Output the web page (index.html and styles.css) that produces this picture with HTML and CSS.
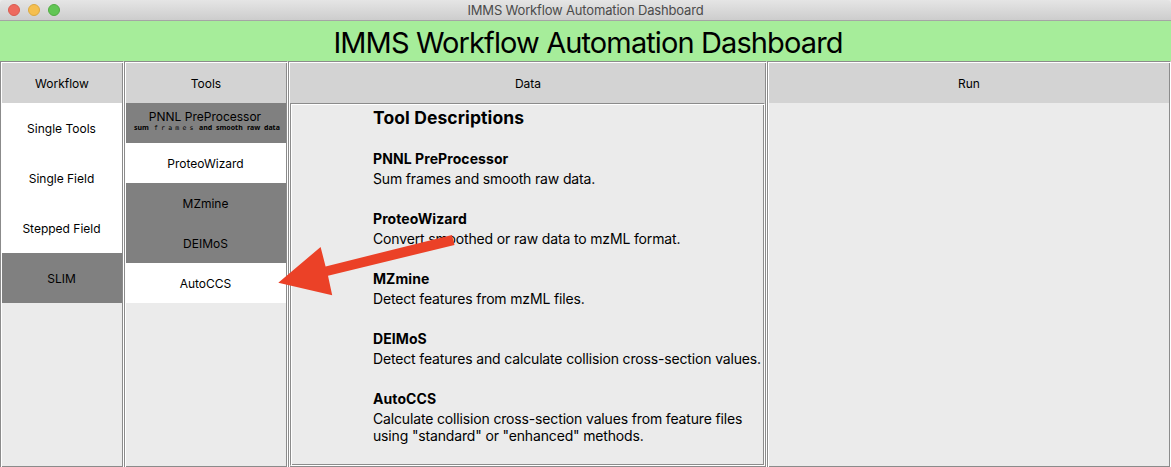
FILE: index.html
```html
<!DOCTYPE html>
<html lang="en">
<head>
<meta charset="utf-8">
<title>IMMS Workflow Automation Dashboard</title>
<link rel="stylesheet" href="styles.css">
</head>
<body>
<div class="window">
  <div class="titlebar">
    <div class="lights"><i class="light close"></i><i class="light minimize"></i><i class="light expand"></i></div>
    <span class="window-title">IMMS Workflow Automation Dashboard</span>
  </div>
  <header class="banner"><h1>IMMS Workflow Automation Dashboard</h1></header>
  <main class="columns">
    <section class="panel">
      <h2>Workflow</h2>
      <div class="option tall">Single Tools</div>
      <div class="option tall">Single Field</div>
      <div class="option tall">Stepped Field</div>
      <div class="option tall dark">SLIM</div>
    </section>
    <section class="panel">
      <h2>Tools</h2>
      <div class="option dark stacked"><span class="name">PNNL PreProcessor</span>
        <span class="hint"><b class="w-sum">sum</b><b class="w-frames">frames</b><b class="w-and">and</b><b class="w-smooth">smooth</b><b class="w-raw">raw</b><b class="w-data">data</b></span>
      </div>
      <div class="option">ProteoWizard</div>
      <div class="option dark">MZmine</div>
      <div class="option dark">DEIMoS</div>
      <div class="option">AutoCCS</div>
    </section>
    <section class="panel">
      <h2 class="data-head">Data</h2>
      <div class="descriptions">
        <h3>Tool Descriptions</h3>
        <article><h4>PNNL PreProcessor</h4><p>Sum frames and smooth raw data.</p></article>
        <article><h4>ProteoWizard</h4><p>Convert smoothed or raw data to mzML format.</p></article>
        <article><h4>MZmine</h4><p>Detect features from mzML files.</p></article>
        <article><h4>DEIMoS</h4><p>Detect features and calculate collision cross-section values.</p></article>
        <article><h4>AutoCCS</h4><p>Calculate collision cross-section values from feature files<br>using "standard" or "enhanced" methods.</p></article>
      </div>
    </section>
    <section class="panel">
      <h2>Run</h2>
    </section>
  </main>
  <svg class="arrow" width="178" height="50" viewBox="278 246 178 50"><path d="M278.3 282.8 320.6 247 325.6 266.4 452 235 454.5 245 328 275.7 332.2 295.2Z" fill="#eb4127"/></svg>
</div>
</body>
</html>
```
FILE: styles.css
```css
* { box-sizing: border-box; margin: 0; padding: 0; }
body { font-family: Inter, "Liberation Sans", sans-serif; color: #000; background: #ebebeb; overflow: hidden; }
.window { position: relative; width: 1171px; height: 467px; overflow: hidden; }
.titlebar { position: relative; height: 21px; display: flex; align-items: center; justify-content: center; background: linear-gradient(#e5e5e5, #cdcdcd); border-bottom: 1px solid #a5a5a5; border-radius: 4px 4px 0 0; }
.lights { position: absolute; left: 8px; top: 4px; display: flex; gap: 8px; }
.light { width: 12px; height: 12px; border-radius: 50%; border: 1px solid; }
.close { background: #ee6a5f; border-color: #d95c50; }
.minimize { background: #f5bf4f; border-color: #dba940; }
.expand { background: #61c654; border-color: #51ac43; }
.window-title { font-size: 13px; line-height: 20px; letter-spacing: -0.17px; color: #4b4b4b; white-space: nowrap; }
.banner { height: 40px; display: flex; justify-content: center; background: #a6ed9a; }
.banner h1 { font-size: 29px; line-height: 43px; font-weight: 400; letter-spacing: -0.89px; white-space: nowrap; padding-left: 5px; }
.columns { height: 407px; display: grid; grid-template-columns: 124px 164px 479px 404px; }
.panel, .descriptions { display: flex; flex-direction: column; border: 1px solid; border-color: #8b8b8b #fff #fff #8b8b8b; padding: 1px; background: linear-gradient(#fff, #fff) 0 0 / 100% 1px no-repeat, linear-gradient(#fff, #fff) 0 0 / 1px 100% no-repeat, linear-gradient(#8b8b8b, #8b8b8b) 0 100% / 100% 1px no-repeat, linear-gradient(#8b8b8b, #8b8b8b) 100% 0 / 1px 100% no-repeat, #ebebeb; }
.panel h2 { height: 40px; flex: none; background: #d3d3d3; font-size: 12px; line-height: 41px; font-weight: 400; text-align: center; }
.panel .data-head { padding-left: 1px; }
.option { height: 40px; background: #fff; font-size: 12px; line-height: 41px; text-align: center; white-space: nowrap; padding-right: 1px; }
.tall { height: 50px; line-height: 51px; }
.dark { background: #808080; }
.stacked { display: flex; flex-direction: column; line-height: 16px; padding-top: 6px; }
.name { padding-right: 1px; }
.hint { display: flex; width: 147px; margin: -2px 0 0 8px; height: 10px; font-family: "Noto Sans", sans-serif; font-size: 7px; line-height: 9px; text-align: left; }
.w-sum { width: 20px; }
.w-frames { width: 45px; font-family: "DejaVu Sans Mono", monospace; font-weight: 400; font-size: 6.5px; letter-spacing: 3.2px; padding-top: 1px; }
.w-and { width: 17px; }
.w-smooth { width: 31px; }
.w-raw { width: 17px; }
.descriptions { flex: 1; padding-left: 82px; }
.descriptions h3 { font-size: 17.5px; line-height: 26px; font-weight: 700; letter-spacing: 0.1px; height: 44px; white-space: nowrap; }
.descriptions article { height: 60px; }
.descriptions h4 { font-size: 14px; line-height: 20px; font-weight: 700; letter-spacing: 0.08px; }
.descriptions p { font-size: 14px; line-height: 17px; letter-spacing: -0.155px; padding-top: 1px; white-space: nowrap; }
.arrow { position: absolute; left: 278px; top: 246px; overflow: visible; }
```
